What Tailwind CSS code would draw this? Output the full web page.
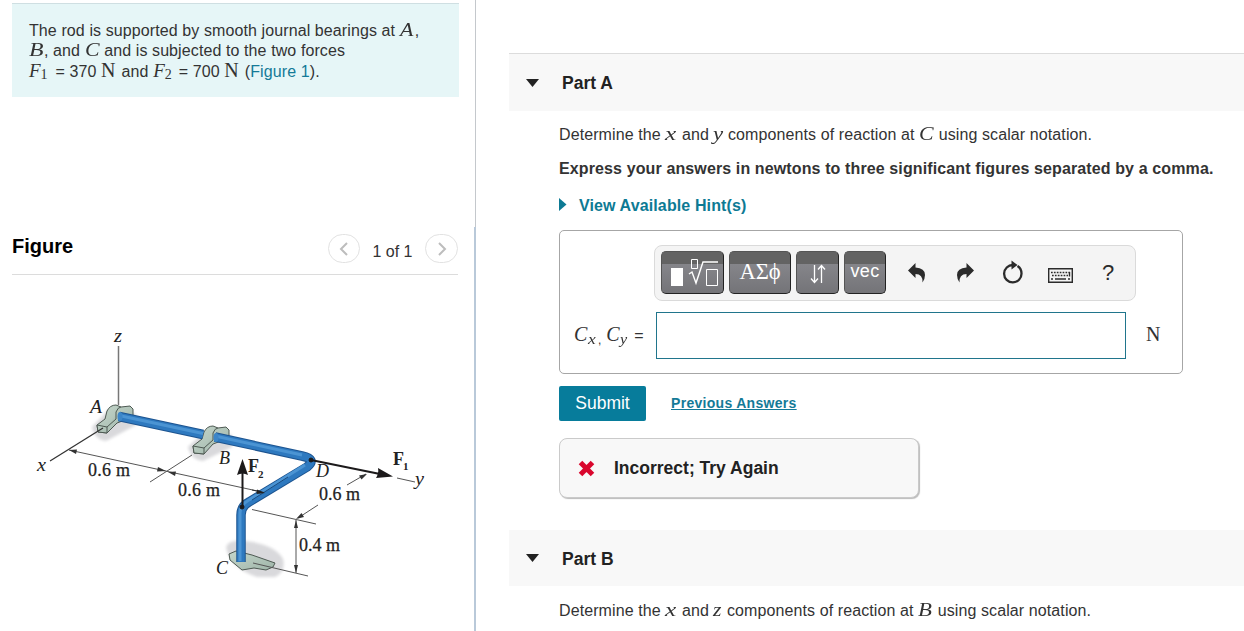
<!DOCTYPE html>
<html lang="en">
  <head>
    <meta charset="UTF-8" />
    <meta name="viewport" content="width=device-width, initial-scale=1.0" />
    <title>Journal Bearings</title>
    <script src="https://cdn.jsdelivr.net/npm/@tailwindcss/browser@4"></script>
  </head>
  <body class="bg-white text-[#333] font-['Liberation_Sans',Arial,sans-serif]">
    <div class="flex h-[631px] overflow-hidden">
      <!-- Problem statement and figure -->
      <aside class="relative w-[476px] shrink-0 border-r border-[#c4c8cc] pt-[3px] pl-3">
        <div
          class="h-[94px] w-[447px] border-t border-[#cfdfe2] bg-[#e6f6f7] pt-4 pl-[17px] text-base leading-5 tracking-[0.1px] whitespace-nowrap"
        >
          <p class="h-5">
            The rod is supported by smooth journal bearings at
            <i class="inline-block w-[15px] text-[19px] leading-none tracking-normal font-['Liberation_Serif',serif]"><span class="inline-block origin-left scale-x-115">A</span></i>,
          </p>
          <p class="h-5">
            <i class="inline-block w-[15px] text-[19px] leading-none tracking-normal font-['Liberation_Serif',serif]"><span class="inline-block origin-left scale-x-125">B</span></i>, and
            <i class="inline-block w-[15px] text-[19px] leading-none tracking-normal font-['Liberation_Serif',serif]"><span class="inline-block origin-left scale-x-115">C</span></i>
            and is subjected to the two forces
          </p>
          <p class="h-5">
            <span class="inline-block w-[22px] text-[19px] leading-none tracking-normal font-['Liberation_Serif',serif]"><i>F</i><span class="relative top-[2px] text-[14px]">1</span></span>
            = 370
            <span class="inline-block w-[16px] text-[20px] leading-none tracking-normal font-['Liberation_Serif',serif]">N</span>
            and
            <span class="inline-block w-[21px] text-[19px] leading-none tracking-normal font-['Liberation_Serif',serif]"><i>F</i><span class="relative top-[2px] text-[14px]">2</span></span>
            = 700
            <span class="inline-block w-[16px] text-[20px] leading-none tracking-normal font-['Liberation_Serif',serif]">N</span>
            (<a class="text-[#147a97]">Figure 1</a>).
          </p>
        </div>

        <div class="mt-[129px] flex h-[49px] w-[446px] items-center border-b border-[#dcdcdc]">
          <h2 class="pb-[9px] text-[20px] font-bold text-black">Figure</h2>
          <div class="ml-auto flex items-center pb-[3px]">
            <button class="flex h-[29px] w-8 items-center justify-center rounded-full border border-[#e2e2e2]">
              <svg class="h-4 w-4" viewBox="0 0 16 16" fill="none" stroke="#bdbdbd" stroke-width="2"><path d="M11 2L5 8L11 14" /></svg>
            </button>
            <span class="w-[65px] pt-[6px] text-center text-base">1 of 1</span>
            <button class="flex h-[29px] w-[33px] items-center justify-center rounded-full border border-[#e2e2e2]">
              <svg class="h-4 w-4" viewBox="0 0 16 16" fill="none" stroke="#bdbdbd" stroke-width="2"><path d="M5 2L11 8L5 14" /></svg>
            </button>
          </div>
        </div>

        <svg
          class="-ml-3 h-[345px] w-[470px] font-['Liberation_Serif',serif]"
          viewBox="0 275 470 345"
          fill="none"
        >
          <defs>
            <linearGradient id="bracket" x1="0" y1="0" x2="1" y2="1">
              <stop offset="0" stop-color="#c5d6cb" />
              <stop offset="1" stop-color="#9fb5a9" />
            </linearGradient>
            <filter id="soft" x="-30%" y="-30%" width="160%" height="160%">
              <feGaussianBlur stdDeviation="1.6" />
            </filter>
          </defs>

          <!-- Shadows -->
          <g fill="#d9d9dc" filter="url(#soft)">
            <path d="M92 427L110 408L136 414V425L106 441Q95 440 92 427Z" />
            <path d="M188 447L206 430L232 435V447L203 461Q191 460 188 447Z" />
            <path d="M226 547Q229 539 246 541Q276 545 283 559Q286 572 275 577L257 577Q230 568 226 547Z" />
          </g>

          <!-- Axes and dimension lines -->
          <g stroke="#555" stroke-width="1">
            <path d="M118.500 346V405" stroke="#777" stroke-width="1.500" />
            <path d="M150 482L192 455" />
            <path d="M69 450L262 492" />
            <path d="M252 509.500L316 524" />
            <path d="M296 520V573M298 518L318 505M347 485L366 474" />
            <path d="M397 478L415 482" />
          </g>
          <g fill="#333">
            <path d="M69 450L77 449.500L76 454Z" />
            <path d="M166 471L158 467L157 471.500Z" />
            <path d="M168 472L176 471.500L175 476Z" />
            <path d="M296 519L304 517L301.500 513Z" />
            <path d="M367 474L359 475.500L361.500 479.500Z" />
            <path d="M296 520L294 528H298Z" />
            <path d="M296 573L294 565H298Z" />
          </g>

          <!-- Brackets -->
          <g stroke="#4d5952" stroke-width="1" fill="url(#bracket)" stroke-linejoin="round">
            <path d="M97 425L105 419L107 411Q110 405 116 405L121 407L130 406L133 409V417L117 423L107 433L98 432Z" />
            <path d="M97 425L107 427L107 433L98 432ZM107 427L116 419V412Q118 407 121 407" />
            <path d="M193 446L202 439L204 432Q207 426 213 426L218 428L226 427L229 430V438L213 444L204 454L194 453Z" />
            <path d="M193 446L204 448L204 454L194 453ZM204 448L213 440V433Q215 428 218 428" />
            <path d="M229 554L236 551L252 555L275 563L273 567L266 570L254 568L242 570L236 565L230 560Z" />
          </g>
          <path d="M50 461L103 428" stroke="#333" stroke-width="1.300" />
          <path d="M253 563L308 576" stroke="#555" />

          <!-- Rod -->
          <g stroke-linejoin="round">
            <path d="M119 416.500L203 434.500M215 437L302 456Q317 459 307 467L249 502Q241 506 241 515V562" stroke="#1d5490" stroke-width="9.500" />
            <path d="M119 416.500L203 434.500M215 437L302 456Q317 459 307 467L249 502Q241 506 241 515V562" stroke="#2e79bf" stroke-width="7.500" />
            <path d="M119 415.500L203 433.500M215 436L302 455M305 465L249 500Q240 505 240 513V561" stroke="#4b94d3" stroke-width="3" />
            <ellipse cx="120" cy="416.500" rx="2.500" ry="4.500" fill="#3c86c8" />
            <ellipse cx="216" cy="437.500" rx="2.500" ry="4.500" fill="#3c86c8" />
          </g>
          <path d="M252 500L288 477" stroke="#1a4a7d" stroke-width="1" />
          <path d="M252 490L264 492.500" stroke="#333" />
          <path d="M265 493L257 489.500L256.500 494Z" fill="#222" />

          <!-- Forces -->
          <g stroke="#1c1a1b" fill="#1c1a1b">
            <path d="M242.500 507V470" stroke-width="2" />
            <path d="M242.500 459L248 475Q242.500 472 237 475Z" stroke="none" />
            <circle cx="242" cy="507" r="2" />
            <path d="M311 460L380 474" stroke-width="2.200" />
            <path d="M393 476.500L376 478Q379 473 378 468Z" stroke="none" />
            <circle cx="311" cy="460" r="2" />
          </g>

          <!-- Labels -->
          <g fill="#222" font-size="18">
            <g font-style="italic">
              <text x="114" y="342" textLength="8" lengthAdjust="spacingAndGlyphs">z</text>
              <text x="37" y="471" textLength="9" lengthAdjust="spacingAndGlyphs">x</text>
              <text x="90" y="413" textLength="12" lengthAdjust="spacingAndGlyphs">A</text>
              <text x="219" y="464">B</text>
              <text x="316" y="477">D</text>
              <text x="216" y="574">C</text>
              <text x="415" y="485" textLength="9" lengthAdjust="spacingAndGlyphs">y</text>
            </g>
            <g stroke="#222" stroke-width=".25">
              <text x="88" y="476" textLength="42">0.6 m</text>
              <text x="178" y="496" textLength="42">0.6 m</text>
              <text x="319" y="500" textLength="41">0.6 m</text>
              <text x="299" y="551" textLength="41">0.4 m</text>
            </g>
            <g font-weight="bold">
              <text x="248" y="472">F<tspan font-size="11" dx="-1" dy="6">2</tspan></text>
              <text x="393" y="465">F<tspan font-size="11" dx="-1" dy="5">1</tspan></text>
            </g>
          </g>
        </svg>
        <div class="absolute top-[227px] -right-px h-[404px] w-[2px] bg-[#b9c9d9]"></div>
      </aside>

      <!-- Parts -->
      <main class="ml-[33px] w-[735px] pt-[53px] whitespace-nowrap">
        <section class="h-[477px]">
          <header class="flex h-[58px] items-center border-t border-[#dcdcdc] bg-[#f8f8f8] pl-[17px]">
            <svg class="h-[8px] w-[13px]" viewBox="0 0 13 8"><path d="M0 0H13L6.500 8Z" fill="#222" /></svg>
            <h3 class="ml-[23px] pt-px text-[17.500px] font-bold text-[#222]">Part A</h3>
          </header>
          <div class="pt-3 pl-[50px]">
            <p class="h-6 text-base leading-6 tracking-[0.1px]">
              Determine the
              <i class="inline-block w-[12px] text-[18px] leading-none tracking-normal font-['Liberation_Serif',serif]"><span class="inline-block origin-left scale-x-140">x</span></i>
              and
              <i class="inline-block w-[10px] text-[19px] leading-none tracking-normal font-['Liberation_Serif',serif]"><span class="inline-block origin-left scale-x-120">y</span></i>
              components of reaction at
              <i class="inline-block w-[15px] text-[19px] leading-none tracking-normal font-['Liberation_Serif',serif]"><span class="inline-block origin-left scale-x-115">C</span></i>
              using scalar notation.
            </p>
            <p class="mt-[10px] h-6 text-base leading-6 font-bold tracking-[0.12px]">
              Express your answers in newtons to three significant figures separated by a comma.
            </p>
            <a class="mt-[13px] flex h-6 items-center text-base font-bold tracking-[0.12px] text-[#0d7a94]">
              <svg class="mb-1 h-[13px] w-[8px]" viewBox="0 0 8 13"><path d="M0 0L7.500 6.500L0 13Z" fill="#0d7a94" /></svg>
              <span class="ml-3">View Available Hint(s)</span>
            </a>

            <div class="mt-3 h-[144px] w-[624px] rounded-[5px] border border-[#a6a6a6] pt-[14px]">
              <div class="ml-[94px] flex h-[56px] w-[482px] items-center rounded-lg border border-[#dadada] bg-[#f4f4f4] pb-[2px] pl-[6px]">
                <button class="flex h-[43px] w-[63px] items-center justify-center rounded-[5px] border border-t-[#555] border-r-[#222] border-b-[#222] border-l-[#555] bg-linear-to-b from-[#636363] from-30% via-[#85858a] via-30% to-[#747478]">
                  <svg class="h-[30px] w-[52px]" viewBox="0 0 52 30" fill="none" stroke="#fff">
                    <path d="M4 11H16V29H4Z" fill="#fff" stroke="none" />
                    <path d="M24.500 2.500H30.500V11.500H24.500Z" />
                    <path d="M22 17L25 15L29 26L36 5H51" stroke-width="1.400" />
                    <path d="M39.500 12.500H50.500V28.500H39.500Z" />
                  </svg>
                </button>
                <button class="ml-[5px] h-[43px] w-[62px] rounded-[5px] border border-t-[#555] border-r-[#222] border-b-[#222] border-l-[#555] bg-linear-to-b from-[#636363] from-30% via-[#85858a] via-30% to-[#747478] text-[22.500px] leading-none text-white font-['Liberation_Serif',serif]">ΑΣϕ</button>
                <button class="ml-[5px] flex h-[43px] w-[43px] items-center justify-center rounded-[5px] border border-t-[#555] border-r-[#222] border-b-[#222] border-l-[#555] bg-linear-to-b from-[#636363] from-30% via-[#85858a] via-30% to-[#747478]">
                  <svg class="mt-[3px] h-5 w-4" viewBox="0 0 16 20" fill="none" stroke="#fff" stroke-width="1.300"><path d="M4.500 1V18M1 14.500L4.500 18.500L8 14.500M11.500 19V2M8 5.500L11.500 1.500L15 5.500" /></svg>
                </button>
                <button class="ml-[5px] h-[43px] w-[42px] rounded-[5px] border border-t-[#555] border-r-[#222] border-b-[#222] border-l-[#555] bg-linear-to-b from-[#636363] from-30% via-[#85858a] via-30% to-[#747478] pb-[2px] text-[18px] leading-none tracking-[0.3px] text-white">vec</button>
                <svg class="mt-[2px] ml-[22px] h-5 w-[18px]" viewBox="0 0 18 20" fill="#2b2b2b"><path d="M0 7.500L7.500 0V4.500Q17 5 17 12Q17 16 14.500 19.500Q15 11 7.500 11V15Z" /></svg>
                <svg class="mt-[2px] ml-[30px] h-5 w-[18px]" viewBox="0 0 18 20" fill="#2b2b2b"><path d="M18 7.500L10.500 0V4.500Q1 5 1 12Q1 16 3.500 19.500Q3 11 10.500 11V15Z" /></svg>
                <svg class="ml-[28px] h-6 w-[22px]" viewBox="0 0 22 24" fill="none">
                  <path d="M15.500 6Q19.500 8.500 19.500 13.500A8.700 8.700 0 1 1 11 5" stroke="#2b2b2b" stroke-width="2.300" />
                  <path d="M9.500 0.500L15.500 5L9.500 9.500Z" fill="#2b2b2b" />
                </svg>
                <svg class="mt-[7px] ml-[24px] h-[15px] w-[25px]" viewBox="0 0 25 15" fill="none" stroke="#2b2b2b">
                  <path d="M.7.7H24.300V14.300H.7Z" stroke-width="1.400" />
                  <path d="M3 4.500H22M4 7.500H20" stroke-width="1.500" stroke-dasharray="1.700 1.200" />
                  <path d="M21.500 4V8.500M3 11H5M7 11H18M20 11H22" stroke-width="1.400" />
                </svg>
                <span class="ml-[29px] pt-[2px] text-[22px] leading-none text-[#2b2b2b]">?</span>
              </div>
              <div class="mt-[11px] flex h-[47px] items-center">
                <span class="flex w-[96px] items-baseline pb-[3px] pl-[14px] text-base leading-none">
                  <i class="w-[14px] text-[20px] leading-none font-['Liberation_Serif',serif]">C</i>
                  <i class="relative top-[3px] w-2 text-[14px] leading-none font-['Liberation_Serif',serif]"><span class="inline-block origin-left scale-x-125">x</span></i>
                  <span class="relative top-[3px] ml-[2px] text-xs leading-none">,</span>
                  <i class="ml-[5px] w-[14px] text-[20px] leading-none font-['Liberation_Serif',serif]">C</i>
                  <i class="relative top-[3px] w-2 text-[14px] leading-none font-['Liberation_Serif',serif]"><span class="inline-block origin-left scale-x-115">y</span></i>
                  <span class="ml-[6px] leading-none">=</span>
                </span>
                <input class="h-[47px] w-[470px] border border-[#20758c] bg-white outline-none" />
                <span class="ml-5 pb-1 text-[20px] leading-none font-['Liberation_Serif',serif]">N</span>
              </div>
            </div>

            <div class="mt-3 flex items-center">
              <button class="h-[35px] w-[87px] rounded-[2px] bg-[#077c9b] text-[17.500px] text-white">Submit</button>
              <a class="ml-[25px] text-[14px] font-bold tracking-[0.3px] text-[#147a97] underline">Previous Answers</a>
            </div>

            <div class="mt-[17px] flex h-[60px] w-[360px] items-center rounded-lg border border-[#cacaca] bg-[#f8f8f8] pl-[18px] shadow-[1px_1px_1px_#bbb]">
              <svg class="h-[17px] w-[17px]" viewBox="0 0 17 17"><path d="M2.500 2.500L14.500 14.500M14.500 2.500L2.500 14.500" stroke="#d9072d" stroke-width="5" /></svg>
              <span class="ml-[19px] pt-px text-[17.500px] font-bold text-[#222]">Incorrect; Try Again</span>
            </div>
          </div>
        </section>

        <section>
          <header class="flex h-[56px] items-center bg-[#f8f8f8] pl-[17px]">
            <svg class="h-[8px] w-[13px]" viewBox="0 0 13 8"><path d="M0 0H13L6.500 8Z" fill="#222" /></svg>
            <h3 class="ml-[23px] pt-[2px] text-[17.500px] font-bold text-[#222]">Part B</h3>
          </header>
          <p class="pt-[13px] pl-[50px] text-base leading-6 tracking-[0.1px]">
            Determine the
            <i class="inline-block w-[12px] text-[18px] leading-none tracking-normal font-['Liberation_Serif',serif]"><span class="inline-block origin-left scale-x-140">x</span></i>
            and
            <i class="inline-block w-[9px] text-[18px] leading-none tracking-normal font-['Liberation_Serif',serif]"><span class="inline-block origin-left scale-x-120">z</span></i>
            components of reaction at
            <i class="inline-block w-[15px] text-[19px] leading-none tracking-normal font-['Liberation_Serif',serif]"><span class="inline-block origin-left scale-x-120">B</span></i>
            using scalar notation.
          </p>
        </section>
      </main>
    </div>
  </body>
</html>
